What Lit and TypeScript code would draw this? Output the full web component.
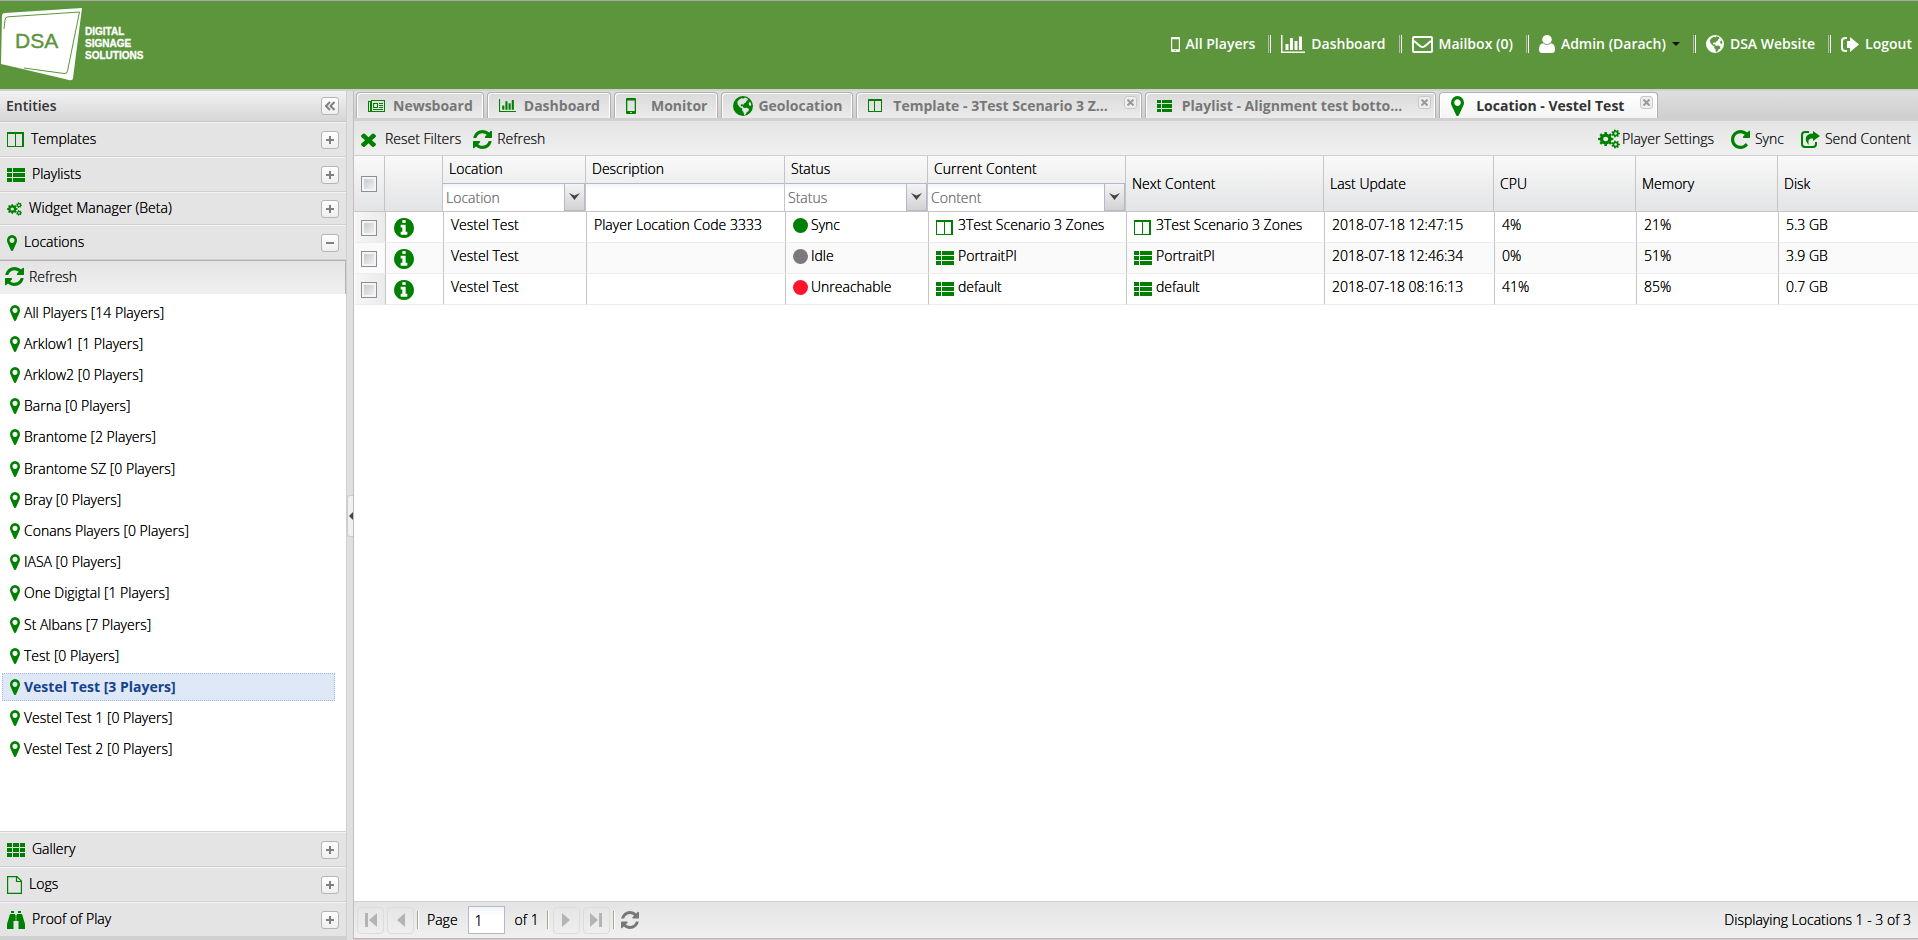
import { LitElement, html, css, svg, nothing } from "lit";
import { customElement, state } from "lit/decorators.js";
import { classMap } from "lit/directives/class-map.js";

/* Outline of a cog centred on cx, cy, with a round hole in it. */
function cog(cx: number, cy: number, outer: number, inner: number, hole: number, teeth: number): string {
  const points: string[] = [];
  const step = (Math.PI * 2) / teeth;
  for (let i = 0; i < teeth; i++) {
    const a = i * step;
    for (const [r, d] of [[inner, -0.3], [outer, -0.2], [outer, 0.2], [inner, 0.3]]) {
      points.push(`${(cx + r * Math.cos(a + d * step)).toFixed(2)} ${(cy + r * Math.sin(a + d * step)).toFixed(2)}`);
    }
  }
  return `M${points.join("L")}ZM${cx - hole} ${cy}a${hole} ${hole} 0 1 0 ${hole * 2} 0a${hole} ${hole} 0 1 0 ${-hole * 2} 0Z`;
}

const COGS = cog(7, 10, 7, 5.4, 2.3, 8) + cog(16, 4.5, 4, 2.9, 1.2, 7) + cog(16, 15.5, 4, 2.9, 1.2, 7);

interface Glyph { w: number; h: number; box: string; body: unknown; }

const fa = (w: number, h: number, box: string, d: string): Glyph => ({ w, h, box, body: svg`<path fill-rule="evenodd" d=${d}></path>` });

const MARKER = "M1152 640q0-106-75-181t-181-75-181 75-75 181 75 181 181 75 181-75 75-181zm256 0q0 109-33 179l-364 774q-16 33-47.5 52t-67.5 19-67.5-19-46.5-52l-365-774q-33-70-33-179 0-212 150-362t362-150 362 150 150 362z";
const CHART = "M640 896v512h-256v-512h256zm384-512v1024h-256v-1024h256zm1024 1152v128h-2048v-1536h128v1408h1920zm-640-896v768h-256v-768h256zm384-384v1152h-256v-1152h256z";
const REFRESH = "M1639 1056q0 5-1 7-64 268-268 434.5t-478 166.5q-146 0-282.5-55t-243.5-157l-129 129q-19 19-45 19t-45-19-19-45v-448q0-26 19-45t45-19h448q26 0 45 19t19 45-19 45l-137 137q71 66 161 102t187 36q134 0 250-65t186-179q11-17 53-117 8-23 30-23h192q13 0 22.5 9.5t9.5 22.5zm25-800v448q0 26-19 45t-45 19h-448q-26 0-45-19t-19-45 19-45l138-138q-148-137-349-137-134 0-250 65t-186 179q-11 17-53 117-8 23-30 23h-199q-13 0-22.5-9.5t-9.5-22.5v-7q65-268 270-434.5t480-166.5q146 0 284 55.5t245 156.5l130-129q19-19 45-19t45 19 19 45z";
const GLOBE = "M10 0a10 10 0 1 0 0 20a10 10 0 1 0 0-20ZM8.2 2.2l2.6.2 1-.9 2.6 1 .6 1.5-1.6 1-.8 1.7-1.7.7-.2 1.4-1.4-.6-1.6.4.2 1.6 1.3.3.7-.6.3 1.5 1.4.5 2.2-.2 2.2 1.3-.4 1.9-1.8 1.3-1.2 2.2-1.5.6-.6-3.1-1.4-1.5.3-1.9-2.3-1.1-2.2-2.7-.6-2.6 1.4-2.2ZM17 5.5l1.3 2.8-.6 1.7-1.5-.5-.5-2Z";
const phone = svg`<path fill-rule="evenodd" d="M1 0h8a1 1 0 0 1 1 1v14a1 1 0 0 1-1 1H1a1 1 0 0 1-1-1V1a1 1 0 0 1 1-1ZM1.300 2.500v10.500h7.400V2.500ZM4.200 14h1.600v1H4.200Z"></path>`;
const listBody = svg`<path shape-rendering="crispEdges" d="M0 0h5v4H0ZM6 0h12v4H6ZM0 5h5v4H0ZM6 5h12v4H6ZM0 10h5v4H0ZM6 10h12v4H6Z"></path>`;

const GLYPHS: Record<string, Glyph> = {
  columns: { w: 17, h: 15, box: "0 0 17 15", body: svg`<path fill-rule="evenodd" shape-rendering="crispEdges" d="M0 0h17v15H0ZM1 2v12h7V2ZM9 2v12h6V2Z"></path>` },
  columnsTab: { w: 14, h: 13, box: "0 0 14 13", body: svg`<path fill-rule="evenodd" shape-rendering="crispEdges" d="M0 0h14v13H0ZM1 2v10h5V2ZM7 2v10h6V2Z"></path>` },
  list: { w: 18, h: 14, box: "0 0 18 14", body: listBody },
  listTab: { w: 15, h: 12, box: "0 0 15 12", body: svg`<path shape-rendering="crispEdges" d="M0 0h4v3H0ZM5 0h10v3H5ZM0 4h4v4H0ZM5 4h10v4H5ZM0 9h4v3H0ZM5 9h10v3H5Z"></path>` },
  grid: { w: 18, h: 14, box: "0 0 18 14", body: svg`<path shape-rendering="crispEdges" d="M0 0h5v4H0ZM6 0h6v4H6ZM13 0h5v4h-5ZM0 5h5v4H0ZM6 5h6v4H6ZM13 5h5v4h-5ZM0 10h5v4H0ZM6 10h6v4H6ZM13 10h5v4h-5Z"></path>` },
  cogs: fa(22, 20, "0 0 20 20", COGS),
  cogsSmall: fa(15, 14, "0 0 20 20", COGS),
  marker: fa(10, 16, "384 128 1024 1536", MARKER),
  markerLarge: fa(13, 20, "384 128 1024 1536", MARKER),
  refresh: fa(19, 19, "128 128 1536 1536", REFRESH),
  refreshGrey: fa(18, 18, "128 128 1536 1536", REFRESH),
  cross: fa(15, 15, "302 238 1188 1316", "M1490 1322q0 40-28 68l-136 136q-28 28-68 28t-68-28l-294-294-294 294q-28 28-68 28t-68-28l-136-136q-28-28-28-68t28-68l294-294-294-294q-28-28-28-68t28-68l136-136q28-28 68-28t68 28l294 294 294-294q28-28 68-28t68 28l136 136q28 28 28 68t-28 68l-294 294 294 294q28 28 28 68z"),
  repeat: fa(19, 19, "128 128 1536 1536", "M1664 256v448q0 26-19 45t-45 19h-448q-42 0-59-40-17-39 14-69l138-138q-148-137-349-137-104 0-198.5 40.5t-163.5 109.5-109.5 163.5-40.5 198.5 40.5 198.5 109.5 163.500 163.500 109.500 198.500 40.500q119 0 225-52t179-147q7-10 23-12 15 0 25 9l137 138q9 8 9.500 20.500t-7.500 22.500q-109 132-264 204.500t-327 72.500q-156 0-298-61t-245-164-164-245-61-298 61-298 164-245 245-164 298-61q147 0 284.500 55.500t244.500 156.500l130-129q29-31 70-14 39 17 39 59z"),
  info: fa(20, 20, "128 128 1536 1536", "M1152 1376v-160q0-14-9-23t-23-9h-96v-512q0-14-9-23t-23-9h-320q-14 0-23 9t-9 23v160q0 14 9 23t23 9h96v320h-96q-14 0-23 9t-9 23v160q0 14 9 23t23 9h448q14 0 23-9t9-23zm-128-896v-160q0-14-9-23t-23-9h-192q-14 0-23 9t-9 23v160q0 14 9 23t23 9h192q14 0 23-9t9-23zm640 416q0 209-103 385.5t-279.5 279.5-385.5 103-385.5-103-279.5-279.5-103-385.5 103-385.5 279.5-279.5 385.5-103 385.5 103 279.5 279.5 103 385.5z"),
  user: fa(16, 18, "256 128 1280 1536", "M1536 1399q0 109-62.5 187t-150.5 78h-854q-88 0-150.5-78t-62.5-187q0-85 8.5-160.5t31.5-152 58.5-131 94-89 134.5-34.5q131 128 313 128t313-128q76 0 134.5 34.5t94 89 58.5 131 31.5 152 8.5 160.5zm-256-887q0 159-112.5 271.5t-271.5 112.5-271.5-112.5-112.500-271.500 112.500-271.500 271.500-112.500 271.500 112.500 112.500 271.500z"),
  chart: fa(17, 13, "0 128 2048 1536", CHART),
  chartLarge: fa(24, 18, "0 128 2048 1536", CHART),
  globe: fa(20, 20, "0 0 20 20", GLOBE),
  globeSmall: fa(18, 18, "0 0 20 20", GLOBE),
  phone: { w: 10, h: 16, box: "0 0 10 16", body: phone },
  phoneSmall: { w: 9, h: 15, box: "0 0 10 16", body: phone },
  mail: { w: 21, h: 17, box: "0 0 21 17", body: svg`<g fill="none" stroke="currentColor" stroke-width="2"><rect x="1" y="1" width="19" height="15" rx="1"></rect><path d="M2 5C5 7 8 11 10.500 11S16 7 19 5"></path></g>` },
  signOut: { w: 18, h: 15, box: "0 0 18 15", body: svg`<path d="M9 4V0L18 7.500 9 15V11H6V4Z"></path><path fill="none" stroke="currentColor" stroke-width="2" d="M6 1H4.500Q1 1 1 4V11Q1 14 4.500 14H6"></path>` },
  share: { w: 19, h: 17, box: "0 0 19 17", body: svg`<path d="M12 0l7 5-7 5V7.500C8 7 6.500 9 8 14 3 10 3.500 2.500 12 2.500Z"></path><path fill="none" stroke="currentColor" stroke-width="2" d="M8 1H4Q1 1 1 4V13Q1 16 4 16H12Q15 16 15 13V11"></path>` },
  file: { w: 15, h: 18, box: "0 0 15 18", body: svg`<path fill="none" stroke="currentColor" stroke-width="1.200" d="M.600.600H10L14.400 5V17.400H.600ZM9.500.600V5.500H14.400"></path>` },
  binoculars: { w: 18, h: 18, box: "0 0 18 18", body: svg`<path d="M4 0h3v2H4ZM11 0h3v2h-3ZM3 3h5v7H6.500v8H0v-5ZM10 3h5l3 10v5h-6.500v-8H10ZM8.300 4h1.400v6H8.300Z"></path>` },
  news: { w: 17, h: 12, box: "0 0 17 12", body: svg`<path fill-rule="evenodd" shape-rendering="crispEdges" d="M3 0h14v12H1a1 1 0 0 1-1-1V1h3ZM1 2v9h1V2ZM4 1v10h12V1ZM5 3h5v5H5ZM6 4v3h3V4ZM11 3h4v1h-4ZM11 5h4v1h-4ZM11 7h4v1h-4ZM5 9h10v1H5Z"></path>` },
};

function icon(name: string) {
  const g = GLYPHS[name];
  return html`<svg class="icon" width=${g.w} height=${g.h} viewBox=${g.box} preserveAspectRatio="none" fill="currentColor" aria-hidden="true">${g.body}</svg>`;
}

interface Tab { icon: string; title: string; closable?: boolean; }
interface Content { icon: string; name: string; }
interface Row { description: string; status: string; current: Content; updated: string; cpu: string; memory: string; disk: string; }

const NAV = [
  { icon: "phoneSmall", label: "All Players" },
  { icon: "chartLarge", label: "Dashboard" },
  { icon: "mail", label: "Mailbox (0)" },
  { icon: "user", label: "Admin (Darach)", menu: true },
  { icon: "globeSmall", label: "DSA Website" },
  { icon: "signOut", label: "Logout" },
];

const TABS: Tab[] = [
  { icon: "news", title: "Newsboard" },
  { icon: "chart", title: "Dashboard" },
  { icon: "phone", title: "Monitor" },
  { icon: "globe", title: "Geolocation" },
  { icon: "columnsTab", title: "Template - 3Test Scenario 3 Z...", closable: true },
  { icon: "listTab", title: "Playlist - Alignment test botto...", closable: true },
  { icon: "markerLarge", title: "Location - Vestel Test", closable: true },
];

const LOCATIONS: [string, number][] = [
  ["All Players", 14], ["Arklow1", 1], ["Arklow2", 0], ["Barna", 0], ["Brantome", 2],
  ["Brantome SZ", 0], ["Bray", 0], ["Conans Players", 0], ["IASA", 0], ["One Digigtal", 1],
  ["St Albans", 7], ["Test", 0], ["Vestel Test", 3], ["Vestel Test 1", 0], ["Vestel Test 2", 0],
];

const ROWS: Row[] = [
  { description: "Player Location Code 3333", status: "Sync", current: { icon: "columns", name: "3Test Scenario 3 Zones" }, updated: "2018-07-18 12:47:15", cpu: "4%", memory: "21%", disk: "5.3 GB" },
  { description: "", status: "Idle", current: { icon: "list", name: "PortraitPl" }, updated: "2018-07-18 12:46:34", cpu: "0%", memory: "51%", disk: "3.9 GB" },
  { description: "", status: "Unreachable", current: { icon: "list", name: "default" }, updated: "2018-07-18 08:16:13", cpu: "41%", memory: "85%", disk: "0.7 GB" },
];

@customElement("app-root")
export class AppRoot extends LitElement {
  @state() private selected = "Vestel Test";
  @state() private activeTab = 6;

  static styles = css`
    :host {
      display: flex;
      flex-direction: column;
      height: 100vh;
      overflow: hidden;
      font: 300 14px/20px "Open Sans", "Noto Sans", sans-serif;
      color: #000;
      background: #d0d0d0;
      /* the light face is printed twice, for denser strokes */
      text-shadow: 0 0 currentColor;
      --green: #008000;
      --line: #d0d0d0;
      --bar: linear-gradient(#e4e4e4, #f0f0f0);
    }
    *, *::before, *::after { box-sizing: border-box; }
    button, input, select { font: inherit; color: inherit; text-shadow: inherit; margin: 0; padding: 0; border: 0; background: none; }
    button, a { cursor: pointer; }
    .icon { display: block; flex: none; }

    .banner {
      flex: none;
      display: flex;
      align-items: center;
      justify-content: space-between;
      height: 89px;
      padding: 0 6px 2px 0;
      background: #5c953b;
      border-top: 1px solid #aaa;
      text-shadow: none;
    }
    .logo { display: block; }
    .nav { display: flex; align-items: center; color: #fff; font-weight: 600; }
    .nav a { display: flex; align-items: center; gap: 6px; color: inherit; text-decoration: none; white-space: nowrap; }
    .nav a + a::before {
      content: "";
      width: 3px;
      height: 18px;
      margin: 0 4px 0 13px;
      border: solid #fff;
      border-width: 0 1px;
      border-left-color: #b9b9b9;
    }
    .caret { border: 4px solid transparent; border-top-color: #111; border-bottom: 0; }

    .body { flex: 1; min-height: 0; display: flex; padding-top: 2px; }

    .side { flex: none; width: 347px; display: flex; flex-direction: column; border-right: 1px solid var(--line); padding-bottom: 3px; }
    .side-title {
      display: flex; align-items: center; justify-content: space-between;
      height: 31px; margin: 0; padding: 0 7px 0 6px;
      font: 600 14px/20px "Open Sans", "Noto Sans", sans-serif; color: #333; text-shadow: none;
      background: linear-gradient(#f2f2f2, #d6d6d6);
      border-bottom: 1px solid #c8c8c8;
    }
    .section {
      flex: none;
      display: flex; align-items: center; gap: 7px;
      height: 35px; padding: 0 7px;
      background: #e4e4e4;
      border-top: 1px solid #f4f4f4;
      border-bottom: 1px solid var(--line);
    }
    .section.short { height: 33px; }
    .section .label { flex: 1; padding-bottom: 2px; }
    .tool {
      width: 18px; height: 18px; display: grid; place-items: center;
      color: #808080; background: linear-gradient(#fff, #efefef);
      border: 1px solid #b5b5b5; border-radius: 3px;
    }
    .green { color: var(--green); }
    .toolbar {
      flex: none; display: flex; align-items: center;
      height: 34px; padding: 2px 7px 0;
      color: #222; background: var(--bar);
    }
    .toolbar button { display: flex; align-items: center; gap: 5px; }
    .toolbar .spaced { gap: 9px; margin-right: 12px; }
    .toolbar .tight { gap: 2px; }
    .toolbar .push { margin-left: auto; }
    .toolbar .next { margin-left: 17px; }
    .side .toolbar { padding: 0 5px 2px; border-top: 1px solid #bfb0b0; border-right: 1px solid #bfb0b0; }
    .locations {
      flex: 1; min-height: 0; overflow: hidden; background: #fff;
      padding: 3px 11px 0 2px; border-bottom: 1px solid var(--line);
    }
    .tree { height: 468px; margin: 0; padding: 0; list-style: none; display: grid; grid-auto-rows: 1fr; align-items: center; }
    .tree button {
      display: flex; align-items: center; gap: 4px; width: 100%; height: 28px;
      padding: 0 7px; text-align: left; border: 1px dotted transparent;
    }
    .tree .current { font-weight: 700; text-shadow: none; color: #15428b; background: #dfe8f6; border-color: #a3bae9; }

    .splitter { flex: none; width: 6px; display: flex; align-items: center; background: #e0e0e0; }
    .handle {
      width: 6px; height: 42px; display: grid; place-items: center;
      background: #f0f0f0; border: 1px solid #ccc; border-right: 0; border-radius: 3px 0 0 3px;
    }
    .handle::before { content: ""; border: 4px solid transparent; border-right-color: #444; border-left: 0; }

    .main { flex: 1; min-width: 0; display: flex; flex-direction: column; border-left: 1px solid #c4bcbc; padding-bottom: 1px; }
    .tabs {
      flex: none; display: flex; align-items: flex-end; gap: 3px;
      height: 30px; padding: 0 2px;
      background: linear-gradient(#dedede, #cfcfcf); border-bottom: 3px solid #d0d0d0;
    }
    .tab {
      display: flex; height: 26px;
      color: #777; font-weight: 700; text-shadow: none; white-space: nowrap;
      background: linear-gradient(#dadada, #ebebeb);
      border: 1px solid #b0b0b0; border-bottom: 0; border-radius: 4px 4px 0 0;
      box-shadow: inset 1px 1px #fff, inset -1px 0 #fff;
    }
    .tab.active { color: #333; background: linear-gradient(#fff, #f4f4f4); }
    .tab-label { display: flex; align-items: center; padding: 0 10px 0 11px; font-weight: inherit; }
    .tab-icon { width: 25px; }
    .close {
      width: 13px; height: 13px; margin: 3px 4px 0 6px; display: grid; place-items: center;
      color: #999; border: 1px solid #c8c8c8; border-radius: 3px; background: #eee;
    }

    .grid-area { flex: 1; min-height: 0; overflow: hidden; background: #fff; border-top: 1px solid var(--line); }
    table { width: 100%; table-layout: fixed; border-collapse: separate; border-spacing: 0; }
    .c-check { width: 31px; }
    .c-info { width: 58px; }
    .c-short { width: 143px; }
    .c-desc { width: 199px; }
    .c-long { width: 198px; }
    .c-date { width: 170px; }
    .c-stat { width: 142px; }
    th {
      height: 56px; padding: 0; font-weight: 300; text-align: left;
      background: linear-gradient(#f9f9f9, #e3e4e6);
      border-right: 1px solid #c5c5c5; border-bottom: 1px solid #c5c5c5;
    }
    th:last-child { border-right: 0; }
    .plain { padding-left: 6px; }
    .head { height: 27px; padding: 3px 6px 0; }
    .filter { display: grid; height: 28px; position: relative; border-top: 1px solid #b5b8c8; background: linear-gradient(#f0f5f7, #fff 6px); }
    .filter select { appearance: none; width: 100%; padding: 0 28px 0 3px; color: #777; }
    .filter input { width: 100%; padding: 0 4px; }
    .arrow {
      position: absolute; right: 0; top: 0; bottom: 0; width: 21px; display: grid; place-items: center;
      pointer-events: none; color: #444; background: linear-gradient(#f4f4f4, #d2d2d2); border: 1px solid #b5b8c8; border-top: 0;
    }
    td {
      height: 31px; padding: 3px 7px 0; vertical-align: top; white-space: nowrap; overflow: hidden;
      border-left: 1px solid #c5c5c5; border-bottom: 1px solid #ededed;
    }
    tr:nth-child(even) td { background: #fafafa; }
    tbody .pick { padding: 8px 0 0 6px; border-left: 1px solid #fff; background: linear-gradient(90deg, #f6f6f6, #ebebeb); }
    .about { padding: 6px 8px 0; }
    .about button { display: block; }
    thead .pick { padding: 0 0 0 7px; }
    .check {
      appearance: none; display: block; width: 16px; height: 16px;
      border: 1px solid #8e8f8f; background: linear-gradient(135deg, #c0c4cc, #f6f6f6);
      box-shadow: inset 0 0 0 2px #f4f4f4;
    }
    .content { display: flex; align-items: center; gap: 4px; height: 20px; }
    .content .pic { width: 18px; padding-top: 4px; }
    .status { display: flex; align-items: center; gap: 3px; height: 20px; }
    .dot { width: 15px; height: 15px; border-radius: 50%; }
    .dot.Sync { background: #008000; }
    .dot.Idle { background: #7c787b; }
    .dot.Unreachable { background: #ff142c; }

    .pager {
      flex: none; display: flex; align-items: center; height: 38px; padding: 0 7px 0 3px;
      background: var(--bar); border-top: 1px solid var(--line); border-bottom: 1px solid #c4b0b6;
    }
    .page-btn { width: 27px; height: 27px; margin-right: 3px; display: grid; place-items: center; color: #b4b4b4; border: 1px solid #dcdcdc; border-radius: 4px; }
    .bar { width: 2px; height: 18px; background: #a8a694; border-right: 1px solid #fff; }
    .page-field { display: flex; align-items: center; gap: 10px; margin: 0 8px; }
    .page-field input { width: 37px; height: 28px; padding: 0 6px; border: 1px solid #b5b8c8; background: linear-gradient(#f0f5f7, #fff 8px); }
    .bar + .page-btn { margin-left: 4px; }
    .reload { margin-left: 6px; color: #777; }
    .summary { margin-left: auto; }
  `;

  private tool(kind: "plus" | "minus" | "collapse", label: string) {
    const d = kind === "plus" ? "M1 5h8M5 1v8" : kind === "minus" ? "M1 5h8" : "M5 1L1 5l4 4M9.500 1l-4 4 4 4";
    return html`<button class="tool" aria-label=${label}>
      <svg class="icon" width="10" height="10" viewBox="0 0 10 10" fill="none" stroke="currentColor" stroke-width="2"><path d=${d}></path></svg>
    </button>`;
  }

  private section(name: string, label: string, short = false, open = false) {
    return html`<div class=${classMap({ section: true, short })}>
      <span class="green">${icon(name)}</span><span class="label">${label}</span>
      ${this.tool(open ? "minus" : "plus", `${open ? "Collapse" : "Expand"} ${label}`)}
    </div>`;
  }

  private filterHead(title: string, hint?: string) {
    return html`<th scope="col">
      <div class="head">${title}</div>
      <div class="filter">
        ${hint
          ? html`<select aria-label=${title}><option>${hint}</option></select>
              <span class="arrow"><svg class="icon" width="11" height="8" viewBox="0 0 11 8" fill="currentColor"><path d="M0 0l5.500 2.500L11 0 5.500 7Z"></path></svg></span>`
          : html`<input type="text" aria-label=${title} />`}
      </div>
    </th>`;
  }

  private content(c: Content) {
    return html`<td><div class="content"><span class="pic green">${icon(c.icon)}</span>${c.name}</div></td>`;
  }

  private pageButton(label: string, d: string) {
    return html`<button class="page-btn" aria-label=${label}>
      <svg class="icon" width="14" height="16" viewBox="0 0 14 16" fill="currentColor"><path d=${d}></path></svg>
    </button>`;
  }

  render() {
    return html`
      <header class="banner">
        <svg class="logo" width="150" height="86" viewBox="0 0 150 86" role="img" aria-label="DSA Digital Signage Solutions">
          <path fill="#fff" d="M2 15q0-3 3-3L82 7 73 77q0 3-4 2L27 69 1 63Z"></path>
          <path fill="none" stroke="#5c953b" d="M4 28L5 19q0-3 3-3.200L79.500 11 67.500 70q-.5 3-3.500 2.500L24 67"></path>
          <g font-family="Liberation Sans, Arial, sans-serif">
            <text x="15" y="47" font-size="21" fill="#5c953b" stroke="#5c953b" stroke-width=".4">DSA</text>
            <g font-size="10" font-weight="700" fill="#fff" stroke="#fff" stroke-width=".3">
              <text x="85" y="34">DIGITAL</text><text x="85" y="46">SIGNAGE</text><text x="85" y="58">SOLUTIONS</text>
            </g>
          </g>
        </svg>
        <nav class="nav">
          ${NAV.map((n) => html`<a href="#">${icon(n.icon)}<span>${n.label}</span>${n.menu ? html`<span class="caret"></span>` : nothing}</a>`)}
        </nav>
      </header>

      <div class="body">
        <aside class="side">
          <h1 class="side-title">Entities ${this.tool("collapse", "Collapse panel")}</h1>
          ${this.section("columns", "Templates")}
          ${this.section("list", "Playlists")}
          ${this.section("cogsSmall", "Widget Manager (Beta)", true)}
          ${this.section("marker", "Locations", false, true)}
          <div class="toolbar"><button><span class="green">${icon("refresh")}</span>Refresh</button></div>
          <div class="locations">
            <ul class="tree">
              ${LOCATIONS.map(([name, count]) => html`<li>
                <button class=${classMap({ current: name === this.selected })} @click=${() => (this.selected = name)}>
                  <span class="green">${icon("marker")}</span>${name} [${count} Players]
                </button>
              </li>`)}
            </ul>
          </div>
          ${this.section("grid", "Gallery")}
          ${this.section("file", "Logs")}
          ${this.section("binoculars", "Proof of Play")}
        </aside>

        <div class="splitter"><button class="handle" aria-label="Collapse sidebar"></button></div>

        <main class="main">
          <div class="tabs" role="tablist">
            ${TABS.map((t, i) => html`<div class=${classMap({ tab: true, active: i === this.activeTab })}>
              <button class="tab-label" role="tab" @click=${() => (this.activeTab = i)}>
                <span class="tab-icon green">${icon(t.icon)}</span>${t.title}
              </button>
              ${t.closable
                ? html`<button class="close" aria-label="Close tab"><svg class="icon" width="7" height="7" viewBox="0 0 7 7" stroke="currentColor" stroke-width="2"><path d="M.5.5l6 6M6.500.5l-6 6"></path></svg></button>`
                : nothing}
            </div>`)}
          </div>

          <div class="toolbar">
            <button class="spaced"><span class="green">${icon("cross")}</span>Reset Filters</button>
            <button><span class="green">${icon("refresh")}</span>Refresh</button>
            <button class="push tight"><span class="green">${icon("cogs")}</span>Player Settings</button>
            <button class="next"><span class="green">${icon("repeat")}</span>Sync</button>
            <button class="next"><span class="green">${icon("share")}</span>Send Content</button>
          </div>

          <div class="grid-area">
            <table>
              <colgroup>
                <col class="c-check" /><col class="c-info" /><col class="c-short" /><col class="c-desc" /><col class="c-short" />
                <col class="c-long" /><col class="c-long" /><col class="c-date" /><col class="c-stat" /><col class="c-stat" /><col />
              </colgroup>
              <thead>
                <tr>
                  <th class="pick"><input class="check" type="checkbox" aria-label="Select all" /></th>
                  <th></th>
                  ${this.filterHead("Location", "Location")}
                  ${this.filterHead("Description")}
                  ${this.filterHead("Status", "Status")}
                  ${this.filterHead("Current Content", "Content")}
                  ${["Next Content", "Last Update", "CPU", "Memory", "Disk"].map((h) => html`<th class="plain" scope="col">${h}</th>`)}
                </tr>
              </thead>
              <tbody>
                ${ROWS.map((r) => html`<tr>
                  <td class="pick"><input class="check" type="checkbox" aria-label="Select row" /></td>
                  <td class="about"><button class="green" aria-label="Details">${icon("info")}</button></td>
                  <td>Vestel Test</td>
                  <td>${r.description}</td>
                  <td><div class="status"><span class="dot ${r.status}"></span>${r.status}</div></td>
                  ${this.content(r.current)}
                  ${this.content(r.current)}
                  <td>${r.updated}</td>
                  <td>${r.cpu}</td>
                  <td>${r.memory}</td>
                  <td>${r.disk}</td>
                </tr>`)}
              </tbody>
            </table>
          </div>

          <footer class="pager">
            ${this.pageButton("First page", "M1 1h3v14H1ZM13 1v14L5 8Z")}
            ${this.pageButton("Previous page", "M11 1v14L3 8Z")}
            <span class="bar"></span>
            <label class="page-field">Page <input type="text" value="1" /> of 1</label>
            <span class="bar"></span>
            ${this.pageButton("Next page", "M3 1v14L11 8Z")}
            ${this.pageButton("Last page", "M13 1h-3v14h3ZM1 1v14L9 8Z")}
            <span class="bar"></span>
            <button class="reload" aria-label="Reload">${icon("refreshGrey")}</button>
            <span class="summary">Displaying Locations 1 - 3 of 3</span>
          </footer>
        </main>
      </div>
    `;
  }
}
